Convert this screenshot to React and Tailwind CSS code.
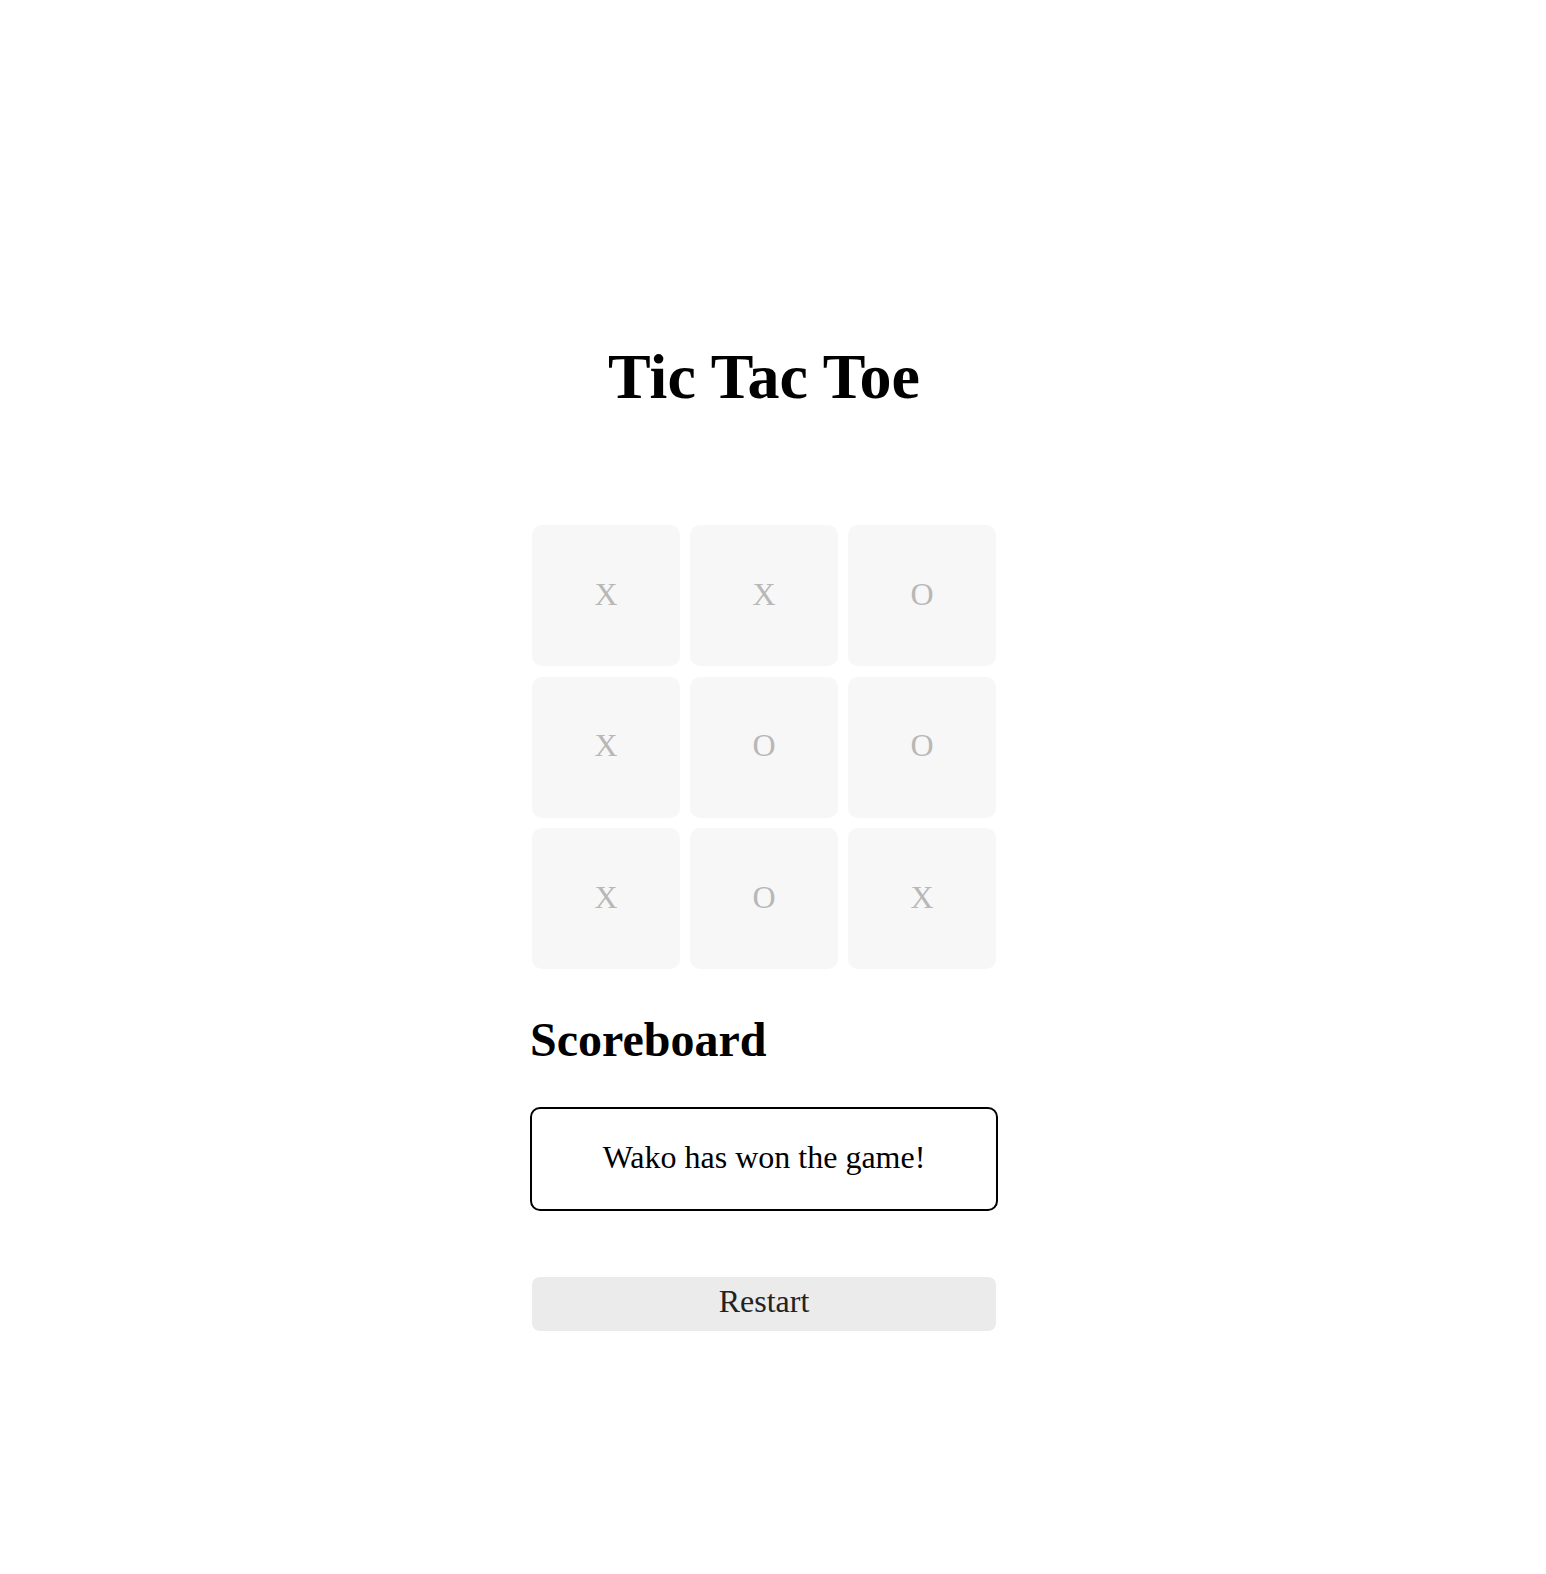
import React, { useState } from "react";

const START = ["X", "X", "O", "X", "O", "O", "X", "O", "X"];

const Cell = ({ value }) => (
  <div className="h-[141px] pb-[4px] bg-[#f7f7f7] rounded-[10px] flex items-center justify-center text-[32px] leading-[32px] text-[#b8b8b8]">
    {value}
  </div>
);

const App = () => {
  const [board, setBoard] = useState(START);

  return (
    <div
      className="min-h-[1574px] bg-white flex justify-center pr-[18px] text-black"
      style={{ fontFamily: '"Liberation Serif", "Times New Roman", serif' }}
    >
      <div className="w-[468px] pt-[345px] flex flex-col">
        {/* Titulo */}
        <h1 className="text-[64px] leading-[64px] font-bold text-center">
          Tic Tac Toe
        </h1>

        {/* Tablero */}
        <div className="mt-[116px] px-[2px] grid grid-cols-3 gap-x-[10px] gap-y-[10.5px]">
          {board.map((v, i) => (
            <Cell key={i} value={v} />
          ))}
        </div>

        {/* Marcador */}
        <h2 className="mt-[47px] text-[48px] leading-[48px] font-bold">
          Scoreboard
        </h2>
        <div className="mt-[43px] border-2 border-black rounded-[10px] pt-[32px] pb-[36px] text-center text-[32px] leading-[32px]">
          Wako has won the game!
        </div>

        <button
          onClick={() => setBoard(START)}
          className="mt-[66px] mx-[2px] h-[54px] pb-[6px] bg-[#ebebeb] rounded-[8px] flex items-center justify-center text-[32px] leading-[32px] text-[#222]"
        >
          Restart
        </button>
      </div>
    </div>
  );
};

export default App;
